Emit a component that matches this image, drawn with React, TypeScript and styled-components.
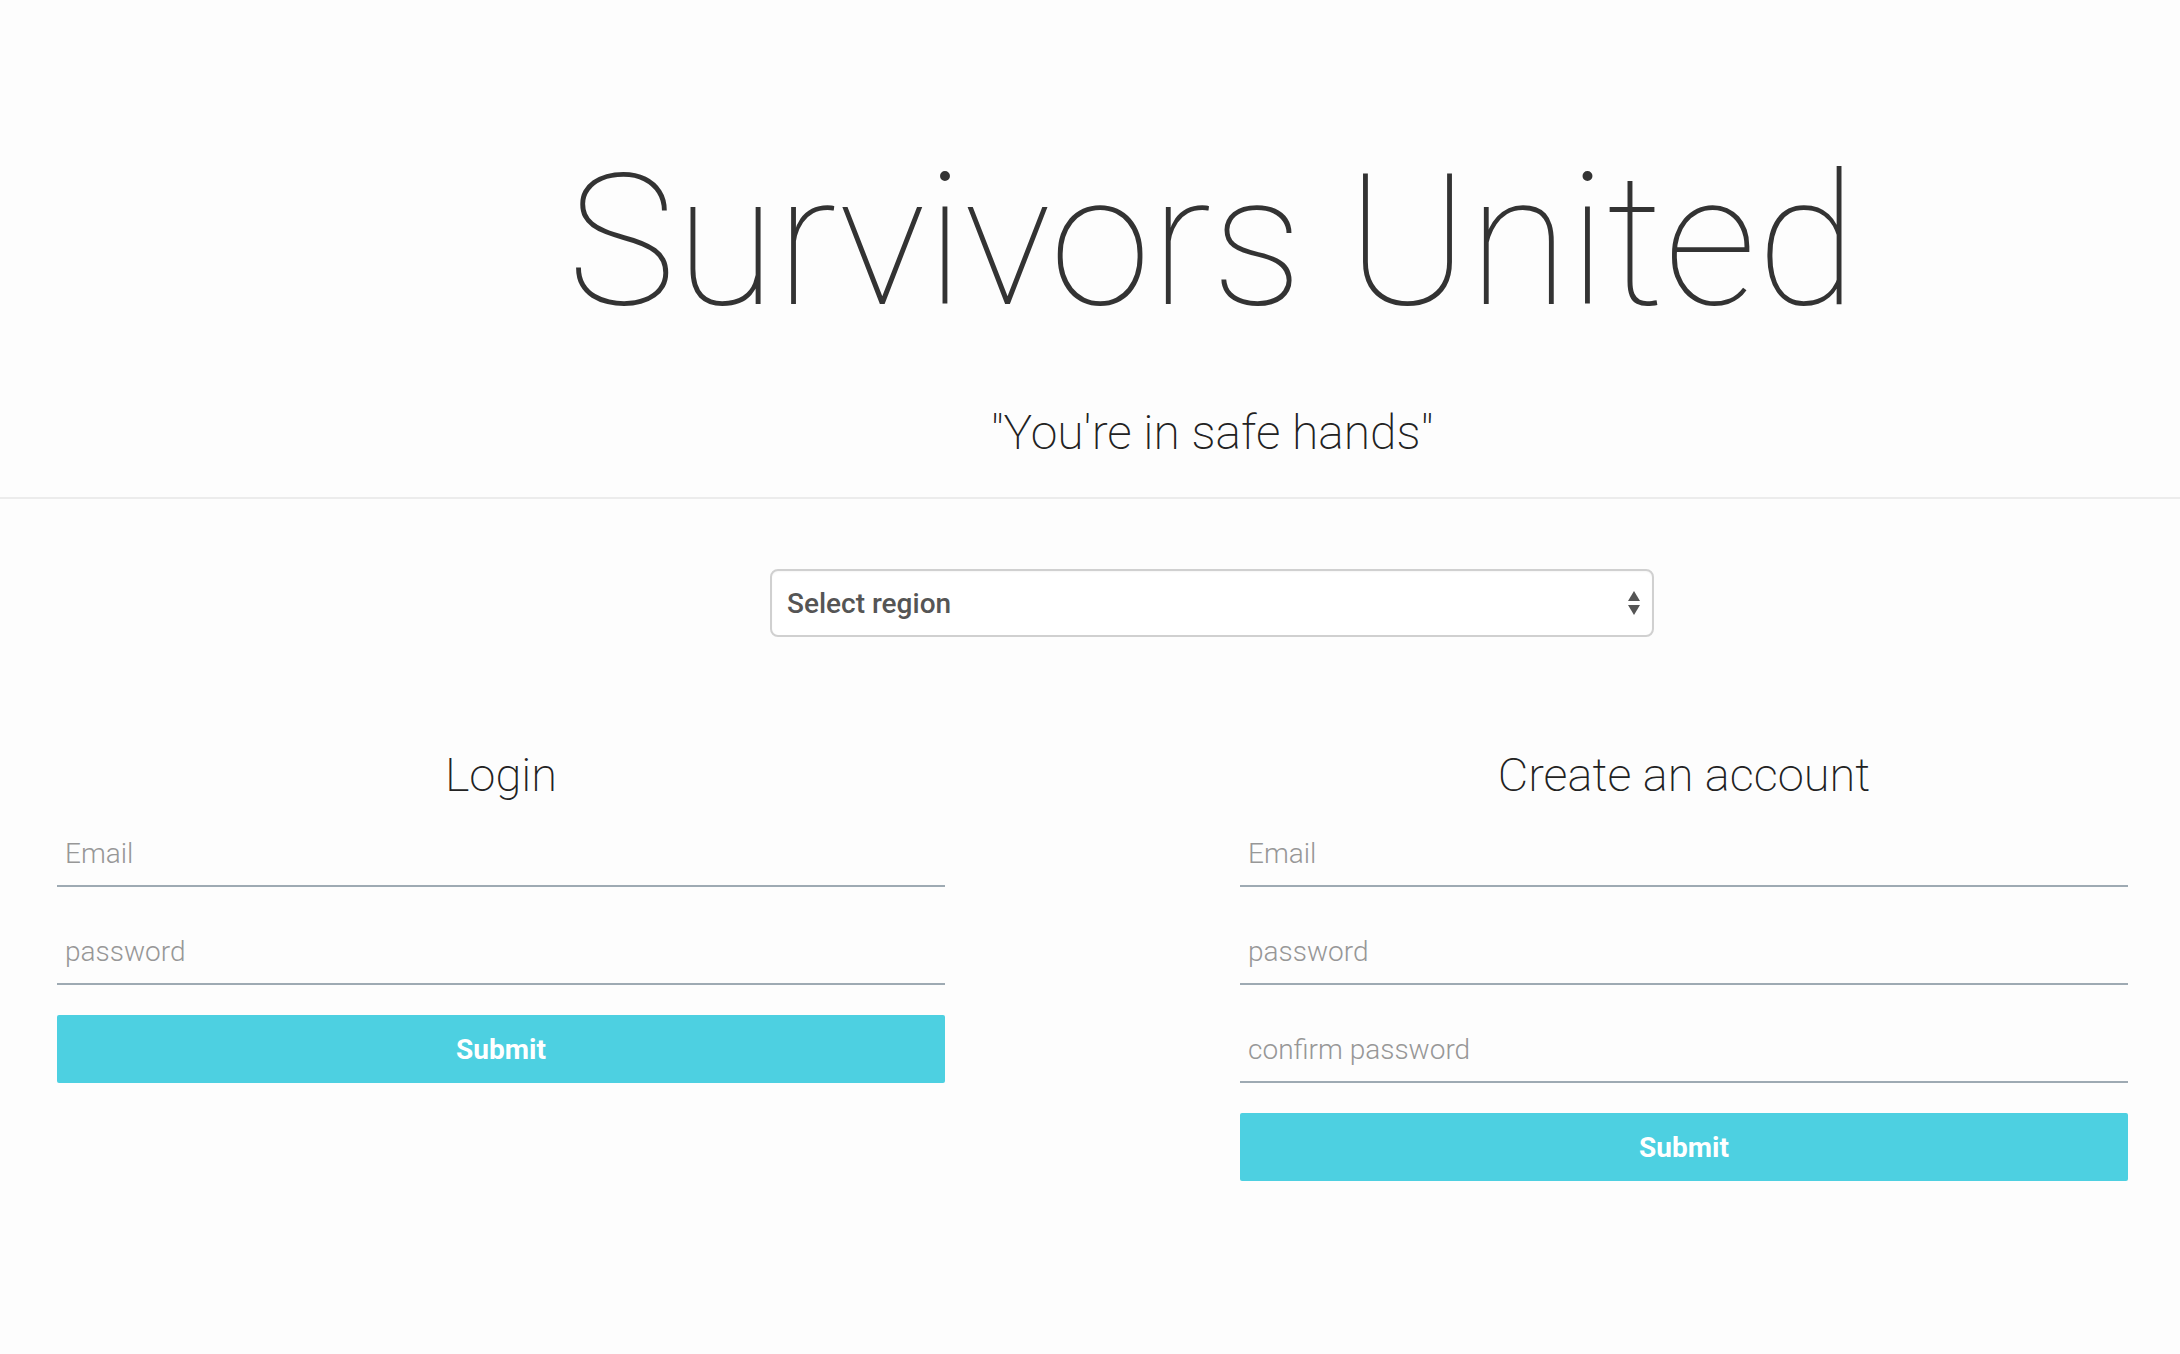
import React from "react";
import styled, { createGlobalStyle } from "styled-components";

const GlobalStyle = createGlobalStyle`
  html, body {
    margin: 0;
    padding: 0;
    background: #fdfdfd;
    font-family: Roboto, "Liberation Sans", sans-serif;
  }
  * { box-sizing: border-box; }
`;

const Page = styled.div`
  width: 2180px;
  min-height: 1354px;
  background: #fdfdfd;
`;

const Header = styled.header`
  padding: 150px 0 40px 244px;
  border-bottom: 2px solid #ececec;
  display: flex;
  flex-direction: column;
  align-items: center;
`;

const Title = styled.h1`
  margin: 0;
  font-family: Roboto, sans-serif;
  font-weight: 100;
  font-size: 183px;
  line-height: 1;
  color: #333;
  white-space: nowrap;
`;

const Tagline = styled.p`
  margin: 76px 0 0;
  font-family: Roboto, sans-serif;
  font-weight: 200;
  font-size: 48px;
  line-height: 1;
  color: #222;
`;

const RegionRow = styled.div`
  padding: 70px 0 0 244px;
  display: flex;
  justify-content: center;
`;

const SelectWrap = styled.div`
  position: relative;
  width: 884px;
  height: 68px;
`;

const RegionSelect = styled.select`
  appearance: none;
  -webkit-appearance: none;
  width: 100%;
  height: 100%;
  padding: 0 48px 0 15px;
  border: 2px solid #d0d0d0;
  border-radius: 8px;
  background: #fff;
  box-shadow: inset 0 1px 2px rgba(0, 0, 0, 0.04);
  font-family: Roboto, sans-serif;
  font-size: 28px;
  font-weight: 500;
  color: #555;
  outline: none;
`;

const Arrows = styled.svg`
  position: absolute;
  right: 13px;
  top: 20px;
  width: 14px;
  height: 28px;
  pointer-events: none;
`;

const Forms = styled.div`
  display: grid;
  grid-template-columns: 888px 888px;
  justify-content: space-between;
  padding: 114px 52px 0 57px;
  align-items: start;
`;

const FormCol = styled.form`
  display: flex;
  flex-direction: column;
`;

const FormTitle = styled.h2`
  margin: 0 0 19px;
  text-align: center;
  font-family: Roboto, sans-serif;
  font-weight: 200;
  font-size: 47px;
  line-height: 1;
  color: #222;
`;

const Field = styled.input`
  height: 70px;
  margin-bottom: 28px;
  padding: 4px 8px 0;
  border: none;
  border-bottom: 2px solid #9eaab3;
  background: transparent;
  font-family: Roboto, sans-serif;
  font-weight: 300;
  font-size: 28px;
  color: #333;
  outline: none;
  &::placeholder {
    color: #979797;
  }
`;

const SubmitButton = styled.button`
  height: 68px;
  margin-top: 2px;
  border: none;
  border-radius: 2px;
  background: #4dd0e1;
  color: #fff;
  font-family: Roboto, sans-serif;
  font-weight: 700;
  font-size: 28px;
  cursor: pointer;
`;

export default function App() {
  return (
    <Page>
      <GlobalStyle />
      <Header>
        <Title>Survivors United</Title>
        <Tagline>"You're in safe hands"</Tagline>
      </Header>
      <RegionRow>
        <SelectWrap>
          <RegionSelect defaultValue="">
            <option value="">Select region</option>
          </RegionSelect>
          <Arrows viewBox="0 0 14 28">
            <path d="M7 2 L13 12 L1 12 Z" fill="#555" />
            <path d="M1 16 L13 16 L7 26 Z" fill="#555" />
          </Arrows>
        </SelectWrap>
      </RegionRow>
      <Forms>
        <FormCol onSubmit={(e) => e.preventDefault()}>
          <FormTitle>Login</FormTitle>
          <Field type="email" placeholder="Email" />
          <Field type="password" placeholder="password" />
          <SubmitButton type="submit">Submit</SubmitButton>
        </FormCol>
        <FormCol onSubmit={(e) => e.preventDefault()}>
          <FormTitle>Create an account</FormTitle>
          <Field type="email" placeholder="Email" />
          <Field type="password" placeholder="password" />
          <Field type="password" placeholder="confirm password" />
          <SubmitButton type="submit">Submit</SubmitButton>
        </FormCol>
      </Forms>
    </Page>
  );
}
